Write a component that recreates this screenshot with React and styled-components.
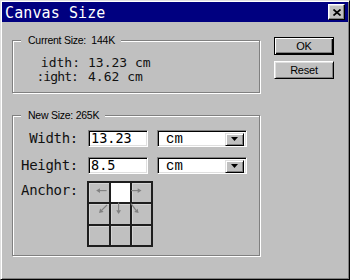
import React from 'react';
import styled, { createGlobalStyle } from 'styled-components';

const Global = createGlobalStyle`
  html, body { margin: 0; padding: 0; background: #c0c0c0; }
  body { width: 350px; height: 280px; overflow: hidden; }
  * { box-sizing: border-box; }
`;

const Window = styled.div`
  width: 350px;
  height: 280px;
  background: #c0c0c0;
  border-style: solid;
  border-width: 1px;
  border-color: #dfdfdf #000 #000 #dfdfdf;
  box-shadow: inset 1px 1px #fff, inset -1px -1px #808080;
  padding: 1px 1px 2px 1px;
  display: flex;
  flex-direction: column;
`;

const TitleBar = styled.div`
  height: 20px;
  background: #000080;
  display: flex;
  align-items: center;
  justify-content: space-between;
  padding: 0 3px 0 3px;
`;

const TitleText = styled.span`
  color: #fff;
  font-family: "DejaVu Sans Mono", monospace;
  font-size: 15px;
  letter-spacing: 0.1px;
  line-height: 20px;
  padding-top: 1px;
`;

const CloseButton = styled.div`
  width: 17px;
  height: 16px;
  background: #c0c0c0;
  border: 1px solid;
  border-color: #fff #000 #000 #fff;
  box-shadow: inset -1px -1px #808080, inset 1px 1px #dfdfdf;
  display: flex;
  align-items: center;
  justify-content: center;
`;

const Body = styled.div`
  display: flex;
  padding-left: 10px;
`;

const Column = styled.div`
  width: 248px;
  display: flex;
  flex-direction: column;
`;

const Group = styled.div`
  position: relative;
  margin-top: ${p => p.$top}px;
  height: ${p => p.$height}px;
  border: 1px solid #808080;
  box-shadow: inset 1px 1px #fff, 1px 1px #fff;
  padding: ${p => p.$pad};
`;

const Legend = styled.span`
  position: absolute;
  top: -7px;
  left: 8px;
  padding: 0 6px 0 7px;
  background: #c0c0c0;
  font-family: "Liberation Sans", Arial, sans-serif;
  font-size: 10.5px;
  letter-spacing: -0.25px;
  line-height: 13px;
  white-space: pre;
  color: #000;
`;

const InfoLine = styled.div`
  display: flex;
  font-family: "DejaVu Sans Mono", monospace;
  font-size: 13px;
  line-height: 14px;
  white-space: pre;
  color: #111;
`;

const LabelCell = styled.div`
  width: ${p => p.$w}px;
  flex-shrink: 0;
  display: flex;
  justify-content: flex-end;
  padding-right: ${p => p.$pr || 0}px;
  & > span { flex-shrink: 0; white-space: pre; letter-spacing: ${p => p.$ls || 0}px; }
`;

const FormRow = styled.div`
  display: flex;
  align-items: ${p => (p.$start ? 'flex-start' : 'center')};
  height: ${p => p.$h}px;
  margin-top: ${p => p.$mt || 0}px;
`;

const FieldLabel = styled(LabelCell)`
  font-family: "DejaVu Sans Mono", monospace;
  font-size: 14px;
  line-height: 17px;
  color: #111;
  margin-top: ${p => p.$mt || 0}px;
  & > span { letter-spacing: -0.3px; }
`;

const TextInput = styled.div`
  width: 60px;
  height: 17px;
  margin-left: 10px;
  background: #fff;
  border: 1px solid;
  border-color: #808080 #fff #fff #808080;
  box-shadow: inset 1px 1px #000, inset -1px -1px #dfdfdf;
  padding-left: 2px;
  font-family: "DejaVu Sans Mono", monospace;
  font-size: 13.5px;
  line-height: 15px;
  color: #000;
`;

const Select = styled.div`
  width: 90px;
  height: 17px;
  margin-left: 9px;
  background: #fff;
  border: 1px solid;
  border-color: #808080 #fff #fff #808080;
  box-shadow: inset 1px 1px #000, inset -1px -1px #dfdfdf;
  display: flex;
  align-items: center;
  justify-content: space-between;
  padding: 2px 2px 1px 8px;
  font-family: "Liberation Mono", monospace;
  font-size: 14px;
  line-height: 13px;
  color: #000;
`;

const DropButton = styled.div`
  width: 19px;
  height: 13px;
  background: #c0c0c0;
  border: 1px solid;
  border-color: #dfdfdf #000 #000 #dfdfdf;
  box-shadow: inset 1px 1px #fff, inset -1px -1px #808080;
  display: flex;
  align-items: center;
  justify-content: center;
`;

const AnchorGrid = styled.div`
  margin-left: 9px;
  display: grid;
  grid-template-columns: 20px 19px 19px;
  grid-template-rows: 19px 20px 19px;
  gap: 2px;
  padding: 2px;
  background: #1e1e1e;
`;

const Cell = styled.div`
  background: ${p => (p.$on ? '#fff' : '#c0c0c0')};
  box-shadow: ${p => (p.$on ? 'none' : 'inset 1px 1px #d4d4d4')};
  display: flex;
`;

const ButtonColumn = styled.div`
  margin-left: 14px;
  margin-top: 15px;
  display: flex;
  flex-direction: column;
  gap: 6px;
`;

const PushButton = styled.div`
  width: 60px;
  height: 18px;
  background: #c0c0c0;
  border: 1px solid;
  border-color: ${p => (p.$default ? '#000' : '#fff #000 #000 #fff')};
  box-shadow: ${p =>
    p.$default
      ? 'inset 1px 1px #fff, inset -1px -1px #000, inset -2px -2px #808080'
      : 'inset 1px 1px #dfdfdf, inset -1px -1px #808080'};
  display: flex;
  align-items: center;
  justify-content: center;
  font-family: "Liberation Sans", Arial, sans-serif;
  font-size: 11px;
  letter-spacing: -0.2px;
  color: #000;
`;

const ArrowSvg = styled.svg`
  width: 100%;
  height: 100%;
  overflow: visible;
`;

const G = '#808080';

const arrows = {
  tl: (
    <>
      <line x1="18" y1="8" x2="10" y2="8" stroke={G} strokeWidth="1.2" />
      <polygon points="7,8 11,5.5 11,10.5" fill={G} />
    </>
  ),
  tr: (
    <>
      <line x1="-1" y1="8" x2="7" y2="8" stroke={G} strokeWidth="1.2" />
      <polygon points="10,8 6,5.5 6,10.5" fill={G} />
    </>
  ),
  ml: (
    <>
      <line x1="18" y1="1" x2="12.8" y2="6.2" stroke={G} strokeWidth="1.2" />
      <polygon points="10,9 14.6,7.9 11.1,4.4" fill={G} />
    </>
  ),
  mc: (
    <>
      <line x1="8" y1="-2" x2="8" y2="6.5" stroke={G} strokeWidth="1.2" />
      <polygon points="8,10 5.5,6 10.5,6" fill={G} />
    </>
  ),
  mr: (
    <>
      <line x1="-1" y1="-1" x2="4.2" y2="6.2" stroke={G} strokeWidth="1.2" />
      <polygon points="7,9 2.4,7.9 5.9,4.4" fill={G} />
    </>
  ),
};

const cells = ['tl', 'on', 'tr', 'ml', 'mc', 'mr', '', '', ''];

function Arrow({ kind }) {
  return <ArrowSvg viewBox="0 0 20 20">{arrows[kind]}</ArrowSvg>;
}

function DropArrow() {
  return (
    <DropButton>
      <svg width="7" height="4" viewBox="0 0 7 4">
        <polygon points="0,0 7,0 3.5,4" fill="#000" />
      </svg>
    </DropButton>
  );
}

export default function App() {
  return (
    <>
      <Global />
      <Window>
        <TitleBar>
          <TitleText>Canvas Size</TitleText>
          <CloseButton>
            <svg width="8" height="7" viewBox="0 0 8 7">
              <path d="M0.5 0.5 L7.5 6.5 M7.5 0.5 L0.5 6.5" stroke="#000" strokeWidth="1.7" />
            </svg>
          </CloseButton>
        </TitleBar>
        <Body>
          <Column>
            <Group $top={18} $height={53} $pad="15px 0 0 28px">
              <Legend>Current Size:  144K</Legend>
              <InfoLine>
                <LabelCell $w={47} $pr={8}><span>idth:</span></LabelCell>
                <span>13.23 cm</span>
              </InfoLine>
              <InfoLine>
                <LabelCell $w={47} $pr={10} $ls={-0.9}><span>:ight:</span></LabelCell>
                <span>4.62 cm</span>
              </InfoLine>
            </Group>
            <Group $top={22} $height={141} $pad="14px 0 0 12px">
              <Legend>New Size: 265K</Legend>
              <FormRow $h={17}>
                <FieldLabel $w={53}><span>Width:</span></FieldLabel>
                <TextInput>13.23</TextInput>
                <Select>
                  <span>cm</span>
                  <DropArrow />
                </Select>
              </FormRow>
              <FormRow $h={17} $mt={10}>
                <FieldLabel $w={53}><span>Height:</span></FieldLabel>
                <TextInput>8.5</TextInput>
                <Select>
                  <span>cm</span>
                  <DropArrow />
                </Select>
              </FormRow>
              <FormRow $h={66} $mt={7} $start>
                <FieldLabel $w={53} $mt={1}><span>Anchor:</span></FieldLabel>
                <AnchorGrid>
                  {cells.map((c, i) => (
                    <Cell key={i} $on={c === 'on'}>
                      {c && c !== 'on' ? <Arrow kind={c} /> : null}
                    </Cell>
                  ))}
                </AnchorGrid>
              </FormRow>
            </Group>
          </Column>
          <ButtonColumn>
            <PushButton $default>OK</PushButton>
            <PushButton>Reset</PushButton>
          </ButtonColumn>
        </Body>
      </Window>
    </>
  );
}
